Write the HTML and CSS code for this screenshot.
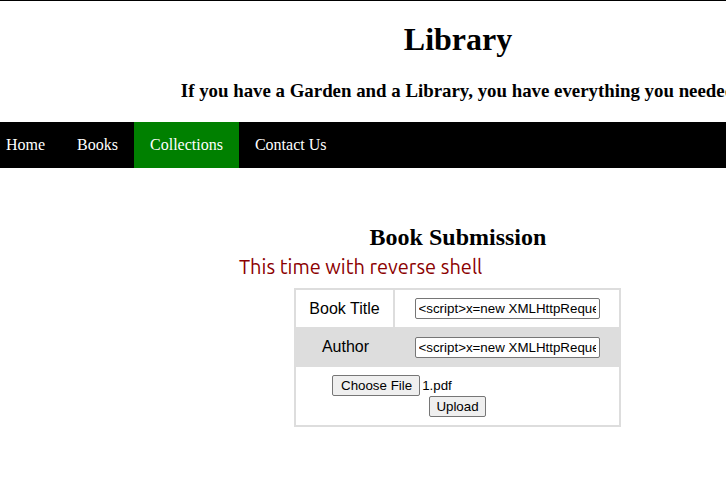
FILE: index.html
```html
<!DOCTYPE html>
<html>
<head>
<meta charset="utf-8">
<title>Library</title>
<link rel="stylesheet" href="styles.css">
</head>
<body>
<div class="page">
  <header class="header">
    <h1 class="title">Library</h1>
    <h3 class="tagline">If you have a Garden and a Library, you have everything you needed</h3>
  </header>
  <nav class="nav">
    <a class="nav-link" href="#">Home</a>
    <a class="nav-link" href="#">Books</a>
    <a class="nav-link active" href="#">Collections</a>
    <a class="nav-link" href="#">Contact Us</a>
  </nav>
  <main class="main">
    <h2 class="section-title">Book Submission</h2>
    <p class="note">This time with reverse shell</p>
    <table class="form-table">
      <tr class="row row-white">
        <td class="label cell-first">Book Title</td>
        <td class="field"><input class="text-input" type="text" value="&lt;script&gt;x=new XMLHttpRequest;x.onload=function(){document.write(this.responseText)};x.open('GET','file:///etc/passwd');x.send();&lt;/script&gt;"></td>
      </tr>
      <tr class="row row-gray">
        <td class="label">Author</td>
        <td class="field"><input class="text-input" type="text" value="&lt;script&gt;x=new XMLHttpRequest;x.onload=function(){document.write(this.responseText)};x.open('GET','file:///etc/passwd');x.send();&lt;/script&gt;"></td>
      </tr>
      <tr class="row row-upload">
        <td class="upload-cell" colspan="2">
          <span class="file-picker"><button class="btn btn-file" type="button">Choose File</button><span class="file-name">1.pdf</span></span><br>
          <button class="btn" type="button">Upload</button>
        </td>
      </tr>
    </table>
  </main>
</div>
</body>
</html>
```

FILE: styles.css
```css
html, body {
  margin: 0;
  padding: 0;
  background: #fff;
  overflow: hidden;
}

.page {
  width: 936px;
  margin-left: -10px;
  border-top: 1px solid #000;
  font-family: "Liberation Serif", "Times New Roman", serif;
  color: #000;
}

.header {
  text-align: center;
  padding-top: 20px;
}

.title {
  margin: 0;
  font-size: 32px;
  line-height: 37px;
  font-weight: bold;
}

.tagline {
  margin: 22px 0 0;
  font-size: 18.85px;
  line-height: 22px;
  font-weight: bold;
  white-space: nowrap;
}

.nav {
  display: flex;
  margin-top: 20px;
  background: #000;
  height: 46px;
}

.nav-link {
  display: block;
  padding: 14px 16px;
  font-size: 16px;
  line-height: 18px;
  color: #fff;
  text-decoration: none;
}

.nav-link.active {
  background: #008000;
}

.main {
  padding-top: 55px;
}

.section-title {
  margin: 0;
  text-align: center;
  font-size: 24px;
  line-height: 28px;
  font-weight: bold;
}

.note {
  margin: 3px 0 0 249px;
  font-family: "Ubuntu", "Noto Sans", sans-serif;
  font-size: 20px;
  line-height: 26px;
  color: #8b0000;
}

.form-table {
  margin: 8px 0 0 304px;
  border: 2px solid #ddd;
  border-collapse: separate;
  border-spacing: 0;
  font-family: "Liberation Sans", Arial, sans-serif;
}

.row-white {
  background: #fff;
}

.row-white td {
  height: 37px;
}

.row-gray {
  background: #ddd;
}

.row-gray td {
  height: 40px;
}

.row-upload {
  background: #fff;
}

.row-upload td {
  height: 58px;
}

.label {
  width: 97px;
  padding: 0;
  text-align: center;
  font-size: 16px;
}

.cell-first {
  border-right: 2px solid #ddd;
  width: 97px;
}

.field {
  width: 224px;
  padding: 0;
  text-align: center;
}

.text-input {
  box-sizing: border-box;
  width: 185px;
  height: 21px;
  margin: 0;
  padding: 1px 3px;
  border: 1px solid #767676;
  border-radius: 2px;
  font-family: "Liberation Sans", Arial, sans-serif;
  font-size: 13.33px;
  color: #000;
  background: #fff;
  vertical-align: middle;
}

.upload-cell {
  padding: 0;
  text-align: center;
  vertical-align: middle;
}

.file-picker {
  display: inline-block;
  width: 251px;
  text-align: left;
  font-size: 13.33px;
}

.file-name {
  margin-left: 2px;
  font-size: 13.33px;
}

.btn {
  box-sizing: border-box;
  height: 21px;
  margin: 0;
  padding: 1px 6px;
  border: 1px solid #767676;
  border-radius: 2px;
  background: #efefef;
  color: #000;
  font-family: "Liberation Sans", Arial, sans-serif;
  font-size: 13.33px;
  line-height: 15px;
}

.btn-file {
  padding: 1px 7px 1px 8px;
}
```
